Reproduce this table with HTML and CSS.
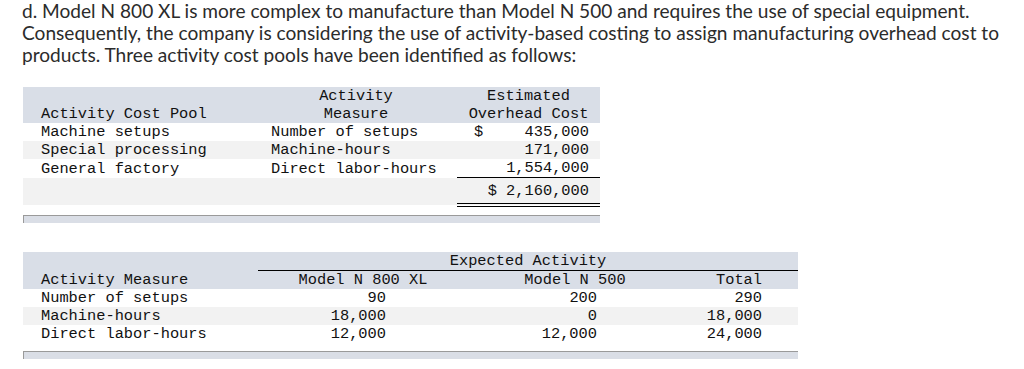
FILE: index.html
```html
<!DOCTYPE html>
<html lang="en">
<head>
  <meta charset="UTF-8">
  <meta name="viewport" content="width=device-width, initial-scale=1.0">
  <title>Activity-based costing</title>
  <link rel="stylesheet" href="styles.css">
</head>
<body>
  <p class="intro">d. Model N 800 XL is more complex to manufacture than Model N 500 and requires the use of special equipment. Consequently, the company is considering the use of activity-based costing to assign manufacturing overhead cost to products. Three activity cost pools have been identified as follows:</p>

  <div class="sheet sheet-pools">
    <table class="ledger">
      <colgroup>
        <col class="c-pool">
        <col class="c-measure">
        <col class="c-cost">
      </colgroup>
      <thead>
        <tr>
          <th class="label">Activity Cost Pool</th>
          <th class="center measure-head">Activity<br>Measure</th>
          <th class="center">Estimated<br>Overhead Cost</th>
        </tr>
      </thead>
      <tbody>
        <tr>
          <td class="label">Machine setups</td>
          <td class="measure">Number of setups</td>
          <td class="cost"><span class="cur">$</span>435,000</td>
        </tr>
        <tr class="alt">
          <td class="label">Special processing</td>
          <td class="measure">Machine-hours</td>
          <td class="cost">171,000</td>
        </tr>
        <tr>
          <td class="label">General factory</td>
          <td class="measure">Direct labor-hours</td>
          <td class="cost">1,554,000</td>
        </tr>
        <tr class="alt total">
          <td></td>
          <td></td>
          <td class="cost grand">$ 2,160,000</td>
        </tr>
      </tbody>
    </table>
    <div class="scrollbar"></div>
  </div>

  <div class="sheet sheet-activity">
    <table class="ledger">
      <colgroup>
        <col class="c-name">
        <col class="c-xl">
        <col class="c-500">
        <col class="c-total">
      </colgroup>
      <thead>
        <tr>
          <th></th>
          <th colspan="3" class="center group">Expected Activity</th>
        </tr>
        <tr>
          <th class="label">Activity Measure</th>
          <th class="center">Model N 800 XL</th>
          <th class="center">Model N 500</th>
          <th class="tot">Total</th>
        </tr>
      </thead>
      <tbody>
        <tr>
          <td class="label">Number of setups</td>
          <td class="xl">90</td>
          <td class="n500">200</td>
          <td class="tot">290</td>
        </tr>
        <tr class="alt">
          <td class="label">Machine-hours</td>
          <td class="xl">18,000</td>
          <td class="n500">0</td>
          <td class="tot">18,000</td>
        </tr>
        <tr>
          <td class="label">Direct labor-hours</td>
          <td class="xl">12,000</td>
          <td class="n500">12,000</td>
          <td class="tot">24,000</td>
        </tr>
      </tbody>
    </table>
    <div class="scrollbar"></div>
  </div>
</body>
</html>
```

FILE: styles.css
```css
body {
  margin: 0;
  padding: 0 22px;
  background: #ffffff;
  color: #2b2b2b;
}

.intro {
  font-family: 'Lato', sans-serif;
  font-size: 19.1px;
  line-height: 22px;
  max-width: 990px;
  margin: 0;
}

.sheet {
  margin-left: 1px;
}

.sheet-pools {
  width: 577px;
  margin-top: 21px;
}

.sheet-activity {
  width: 775px;
  margin-top: 29px;
}

.ledger {
  width: 100%;
  border-collapse: collapse;
  table-layout: fixed;
  font-family: 'Liberation Mono', monospace;
  font-size: 15.35px;
  line-height: 18px;
  color: #111;
  margin-bottom: 8px;
}

.ledger th,
.ledger td {
  padding: 0;
  font-weight: normal;
  vertical-align: bottom;
  white-space: nowrap;
}

.ledger thead tr {
  background: #d9dee7;
}

.ledger tr.alt {
  background: #f2f2f2;
}

.ledger .label {
  text-align: left;
  padding-left: 18px;
}

.ledger .center {
  text-align: center;
}

/* first table */
.c-pool { width: 240px; }
.c-measure { width: 194px; }
.c-cost { width: 143px; }

.ledger .measure {
  padding-left: 8px;
}

.ledger .measure-head {
  padding-right: 8px;
}

.ledger .cost {
  text-align: right;
  padding-left: 17px;
  padding-right: 11px;
}

.ledger .cur {
  float: left;
}

.ledger .grand {
  border-top: 1px solid #000;
  border-bottom: 4px double #000;
  padding-top: 4px;
  padding-bottom: 3px;
}

/* second table */
.c-name { width: 235px; }
.c-xl { width: 210px; }
.c-500 { width: 214px; }
.c-total { width: 116px; }

.ledger .group {
  border-bottom: 1px solid #000;
}

.ledger .xl {
  text-align: right;
  padding-right: 82px;
}

.ledger .n500 {
  text-align: right;
  padding-right: 85px;
}

.ledger .tot {
  text-align: right;
  padding-right: 36px;
}

.scrollbar {
  height: 7px;
  background: #dadee6;
  border-top: 1px solid #9a9a9a;
  border-left: 1px solid #9a9a9a;
}
```
